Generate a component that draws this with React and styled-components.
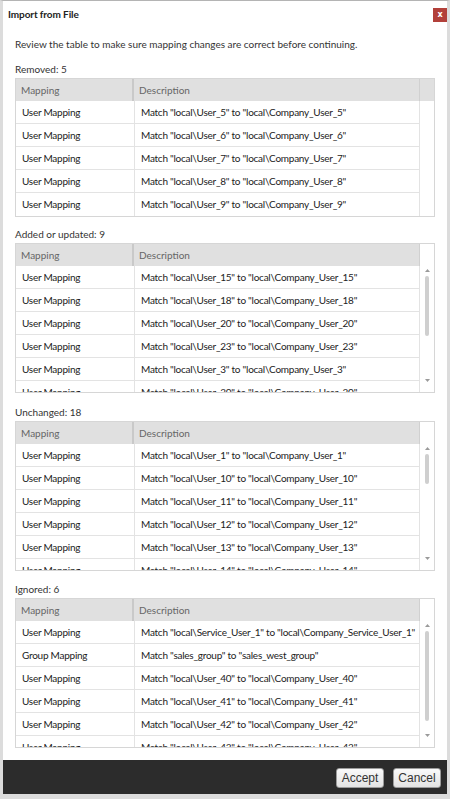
import React from "react";
import styled, { createGlobalStyle } from "styled-components";

const Global = createGlobalStyle`
  html, body { margin: 0; padding: 0; background: #d4d4d4; }
  * { box-sizing: border-box; }
  body { font-family: Lato, "Open Sans", sans-serif; }
`;

const Frame = styled.div`
  width: 450px;
  height: 799px;
  background: #fff;
  border-top: 1px solid #b4b4b4;
  border-left: 3px solid #dcdcdc;
  border-right: 3px solid #dcdcdc;
  border-bottom: 5px solid #dcdcdc;
  display: flex;
  flex-direction: column;
  overflow: hidden;
`;

const TitleBar = styled.div`
  height: 29px;
  display: flex;
  align-items: flex-start;
  justify-content: space-between;
  padding: 6px 0 0 5px;
`;

const Title = styled.div`
  font-size: 10px;
  font-weight: 700;
  letter-spacing: -0.1px;
  color: #222;
  line-height: 14px;
`;

const CloseButton = styled.div`
  width: 14px;
  height: 14px;
  margin-top: 1px;
  background: #b2403a;
  color: #fff;
  font-family: "DejaVu Sans", sans-serif;
  font-size: 8px;
  font-weight: 700;
  line-height: 13px;
  text-align: center;
`;

const Content = styled.div`
  flex: 1;
  padding: 7px 12px 0 12px;
  display: flex;
  flex-direction: column;
`;

const Intro = styled.div`
  font-size: 10px;
  line-height: 14px;
  color: #333;
  margin-bottom: 11px;
`;

const Section = styled.div`
  margin-bottom: ${(p) => p.$gap}px;
`;

const Label = styled.div`
  font-size: 10px;
  line-height: 14px;
  color: #333;
  margin-bottom: 2px;
`;

const Table = styled.div`
  width: 420px;
  border: 1px solid #d6d6d6;
  display: flex;
`;

const Main = styled.div`
  flex: 1;
  display: flex;
  flex-direction: column;
  min-width: 0;
`;

const HeaderRow = styled.div`
  height: 22px;
  display: flex;
  background: #e0e0e0;
`;

const HeaderCell = styled.div`
  width: ${(p) => (p.$first ? "118px" : "auto")};
  flex: ${(p) => (p.$first ? "none" : "1")};
  border-right: ${(p) => (p.$first ? "2px solid #c9c9c9" : "1px solid #d0d0d0")};
  padding-left: 5px;
  font-size: 10px;
  line-height: 22px;
  color: #666;
`;

const Body = styled.div`
  height: ${(p) => (p.$height ? `${p.$height}px` : "auto")};
  overflow: hidden;
`;

const Row = styled.div`
  height: 23px;
  display: flex;
  border-bottom: ${(p) => (p.$last ? "none" : "1px solid #e3e3e3")};
`;

const Cell = styled.div`
  width: ${(p) => (p.$first ? "119px" : "auto")};
  flex: ${(p) => (p.$first ? "none" : "1")};
  border-right: 1px solid #e3e3e3;
  padding-left: 6px;
  font-size: 10px;
  letter-spacing: -0.25px;
  line-height: 22px;
  color: #222;
  white-space: nowrap;
  overflow: hidden;
`;

const Gutter = styled.div`
  width: 14px;
  display: flex;
  flex-direction: column;
  align-items: center;
`;

const GutterHead = styled.div`
  width: 100%;
  height: 22px;
  background: ${(p) => (p.$filled ? "#e0e0e0" : "transparent")};
`;

const Arrow = styled.div`
  height: 9px;
  display: flex;
  align-items: center;
  justify-content: center;
`;

const Track = styled.div`
  height: 99px;
  width: 4px;
  margin: 1px 0;
`;

const Thumb = styled.div`
  width: 4px;
  background: #cfcfcf;
  border-radius: 2px;
`;

const Footer = styled.div`
  height: 34px;
  background: #2c2c2c;
  display: flex;
  align-items: center;
  justify-content: flex-end;
  gap: 9px;
  padding: 0 6px 0 0;
  flex: none;
`;

const Button = styled.button`
  width: 48px;
  height: 20px;
  padding: 0;
  margin-top: 2px;
  border: 1px solid #9c9c9c;
  border-radius: 3px;
  background: linear-gradient(#fafafa, #e3e3e3);
  font-family: "Liberation Sans", Arial, sans-serif;
  font-size: 12px;
  color: #333;
`;

const Tri = ({ down }) => (
  <svg width="5" height="3" viewBox="0 0 5 3">
    <path d={down ? "M0 0 L5 0 L2.5 3 Z" : "M0 3 L5 3 L2.5 0 Z"} fill="#9a9a9a" />
  </svg>
);

const um = (a, b) => ({ type: "User Mapping", desc: `Match "local\\${a}" to "local\\${b}"` });
const user = (n) => um(`User_${n}`, `Company_User_${n}`);

const sections = [
  { label: "Removed: 5", rows: [5, 6, 7, 8, 9].map(user), scroll: false, gap: 10 },
  { label: "Added or updated: 9", rows: [15, 18, 20, 23, 3, 30, 31, 32, 33].map(user), scroll: true, gap: 12 },
  {
    label: "Unchanged: 18",
    rows: [1, 10, 11, 12, 13, 14, 16, 17, 19, 2, 21, 22, 24, 25, 26, 27, 28, 29].map(user),
    scroll: true,
    gap: 11,
  },
  {
    label: "Ignored: 6",
    rows: [
      um("Service_User_1", "Company_Service_User_1"),
      { type: "Group Mapping", desc: 'Match "sales_group" to "sales_west_group"' },
      user(40),
      user(41),
      user(42),
      user(43),
    ],
    scroll: true,
    gap: 0,
  },
];

const BODY_H = 126;
const TRACK = 99;

function MappingTable({ rows, scroll }) {
  const total = rows.length * 23;
  const thumb = Math.round((TRACK * BODY_H) / total);
  return (
    <Table>
      <Main>
        <HeaderRow>
          <HeaderCell $first>Mapping</HeaderCell>
          <HeaderCell>Description</HeaderCell>
        </HeaderRow>
        <Body $height={scroll ? BODY_H : 0}>
          {rows.map((r, i) => (
            <Row key={i} $last={!scroll && i === rows.length - 1}>
              <Cell $first>{r.type}</Cell>
              <Cell>{r.desc}</Cell>
            </Row>
          ))}
        </Body>
      </Main>
      <Gutter>
        <GutterHead $filled={!scroll} />
        {scroll && (
          <>
            <Arrow><Tri /></Arrow>
            <Track>
              <Thumb style={{ height: thumb }} />
            </Track>
            <Arrow><Tri down /></Arrow>
          </>
        )}
      </Gutter>
    </Table>
  );
}

export default function App() {
  return (
    <>
      <Global />
      <Frame>
        <TitleBar>
          <Title>Import from File</Title>
          <CloseButton>x</CloseButton>
        </TitleBar>
        <Content>
          <Intro>Review the table to make sure mapping changes are correct before continuing.</Intro>
          {sections.map((s) => (
            <Section key={s.label} $gap={s.gap}>
              <Label>{s.label}</Label>
              <MappingTable rows={s.rows} scroll={s.scroll} />
            </Section>
          ))}
        </Content>
        <Footer>
          <Button>Accept</Button>
          <Button>Cancel</Button>
        </Footer>
      </Frame>
    </>
  );
}
